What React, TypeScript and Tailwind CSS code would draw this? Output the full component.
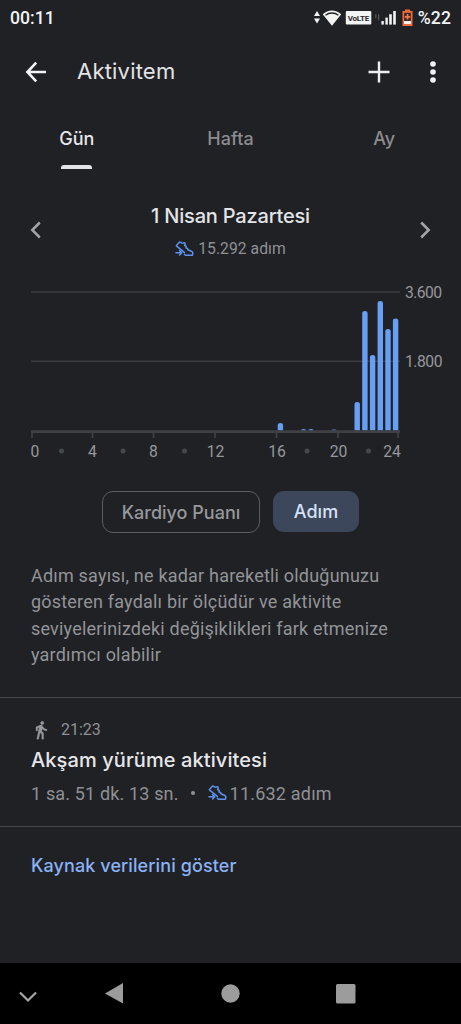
import type { ReactNode } from 'react'

const TICKS = [
  { x: 32, label: '0', labelX: 35 },
  { x: 92.5, label: '4', labelX: 92.5 },
  { x: 153.5, label: '8', labelX: 153.5 },
  { x: 215, label: '12', labelX: 215.5 },
  { x: 276.5, label: '16', labelX: 277 },
  { x: 338, label: '20', labelX: 338.5 },
  { x: 398, label: '24', labelX: 392 },
]

const DOTS = [61.5, 123, 184.5, 307, 368.5]

// one bar per half hour, y measured from the top of the chart
const BARS = [
  { x: 280.4, top: 143 },
  { x: 303.5, top: 149 },
  { x: 311, top: 149 },
  { x: 334, top: 149.4 },
  { x: 357.2, top: 122 },
  { x: 364.9, top: 31 },
  { x: 372.6, top: 75 },
  { x: 380.3, top: 21 },
  { x: 388, top: 49 },
  { x: 395.6, top: 38.5 },
]

function ShoeIcon() {
  return (
    <svg width="19" height="16" viewBox="0 0 19 16" fill="none" stroke="#5b93ee" strokeWidth="1.5" strokeLinejoin="round" strokeLinecap="round" className="shrink-0">
      <path d="M9.4 11.4L1.6 5.2Q1.2 4.6 1.8 4L4.4 1.2Q5 .7 5.6 1.3Q6.8 2.6 8.6 1.9Q9.8 1.6 10.2 2.8L9.6 4.6L11.2 5.2L11 7L12.6 7.4L12.8 8.8L16.4 10.2Q18.6 11.4 17.4 14.2H11.4Q10.2 14.2 9.4 13.4" />
      <path d="M1 11.8H6.4M4.6 9.6L6.8 11.8L4.6 14" />
    </svg>
  )
}

function StatusBar() {
  return (
    <div className="flex h-[37px] items-center justify-between pl-[10px] pr-[10px] font-['Roboto',sans-serif] text-[17.6px] font-medium text-[#f1f3f4]">
      <span>00:11</span>
      <div className="flex items-center">
        <svg width="84" height="20" viewBox="0 0 84 20" fill="#f4f4f5">
          <path d="M0 8L3 3L6 8ZM0 10.5H6L3 15.5Z" />
          <path d="M8.7 6.3C13.8 1.2 22 1.2 27.2 6.3L18 17.8Z" />
          <path d="M11.5 7.3C15.3 4.2 20.6 4.2 24.4 7.3" fill="none" stroke="#202125" strokeWidth="1.3" />
          <rect x="31.8" y="3" width="25.5" height="13.5" rx="1" />
          <text x="44.5" y="12.7" textAnchor="middle" fontFamily="Roboto" fontWeight="700" fontSize="8" fill="#27282b" textLength="21.5">VoLTE</text>
          <rect x="61.2" y="6.3" width="1.2" height="4" fill="#55565a" />
          <rect x="64" y="6.3" width="1.2" height="6" fill="#55565a" />
          <rect x="67.4" y="13" width="2.4" height="3.6" />
          <rect x="71.4" y="9.6" width="2.4" height="7" />
          <rect x="75.2" y="6.2" width="2.6" height="10.4" />
          <rect x="79.2" y="3" width="2.6" height="13.6" />
        </svg>
        <svg width="11" height="18" viewBox="0 0 11 18" className="ml-[4px]">
          <path d="M3 .5H8V2H10.5V17H.5V2H3Z" fill="#ef6d3d" />
          <rect x="2.2" y="3.8" width="6.6" height="11" fill="#3a2622" />
          <path d="M5.5 5V10.5M2.8 7.8H8.2" stroke="#ef7b50" strokeWidth="1.7" />
          <rect x="2" y="12" width="7" height="3" fill="#f8efec" />
        </svg>
        <span className="ml-[5px] tracking-[0.1px]">%22</span>
      </div>
    </div>
  )
}

function AppBar() {
  return (
    <header className="flex h-[69px] items-center">
      <svg width="22" height="22" viewBox="0 0 22 22" fill="none" stroke="#f1f3f4" strokeWidth="2.6" className="ml-[25px]">
        <path d="M21 11H3M11.2 1.7L2.4 11L11.2 20.3" />
      </svg>
      <h1 className="ml-[30px] grow text-[22px] tracking-[0.2px] text-[#e3e3e6]">Aktivitem</h1>
      <svg width="22" height="22" viewBox="0 0 22 22" stroke="#eeeef0" strokeWidth="2.4">
        <path d="M11 .5V21.5M.5 11H21.5" />
      </svg>
      <svg width="6" height="22" viewBox="0 0 6 22" fill="#f1f3f4" className="ml-[40px] mr-[25px]">
        <circle cx="3" cy="3" r="2.8" />
        <circle cx="3" cy="11" r="2.8" />
        <circle cx="3" cy="19" r="2.8" />
      </svg>
    </header>
  )
}

function Tab({ active, children }: { active?: boolean; children: ReactNode }) {
  return (
    <button className={`flex flex-col items-center text-[18px] leading-6 font-medium ${active ? 'text-[#e6e7ea]' : 'text-[#8b8c90]'}`}>
      <span>{children}</span>
      {active && <span className="mt-[14px] h-1 w-[31px] rounded-t-[3px] bg-[#e3e4e8]" />}
    </button>
  )
}

function StepsChart() {
  return (
    <svg width="461" height="190" viewBox="0 0 461 190" className="block font-['Roboto',sans-serif]" fill="#96979b" fontSize="15.7">
      <path d="M31 11.9H400M31 81.3H400" stroke="#3b3c40" strokeWidth="1.5" />
      {BARS.map((b) => (
        <path key={b.x} d={`M${b.x - 2.7} 150.5V${Math.min(b.top + 2, 150.5)}Q${b.x - 2.7} ${b.top} ${b.x} ${b.top}T${b.x + 2.7} ${Math.min(b.top + 2, 150.5)}V150.5Z`} fill="#689ff3" />
      ))}
      <rect x="31" y="150.3" width="369" height="2.7" fill="#404145" />
      {TICKS.map((t) => (
        <g key={t.label}>
          <rect x={t.x - 0.8} y="152" width="1.6" height="6" fill="#404145" />
          <text x={t.labelX} y="176.5" textAnchor="middle">{t.label}</text>
        </g>
      ))}
      {DOTS.map((x) => (
        <circle key={x} cx={x} cy="171" r="2.5" fill="#46474b" />
      ))}
      <text x="405" y="17.6" textLength="37">3.600</text>
      <text x="405" y="87" textLength="37.5">1.800</text>
    </svg>
  )
}

function NavBar() {
  return (
    <nav className="mt-auto flex h-[61px] items-start bg-black">
      <svg width="461" height="61" viewBox="0 0 461 61" fill="#9c9c9c">
        <path d="M20 29.5L28 37.5L36 29.5" fill="none" stroke="#a5a5a5" strokeWidth="2.2" />
        <path d="M105 30.5L123 20V40.5Z" />
        <circle cx="230.5" cy="30.5" r="9.2" />
        <rect x="336" y="21" width="19.5" height="19.5" rx="1.5" />
      </svg>
    </nav>
  )
}

export default function App() {
  return (
    <div className="flex h-[1024px] w-[461px] flex-col overflow-hidden bg-[#202125] font-['Inter',sans-serif]">
      <StatusBar />
      <AppBar />

      <div className="grid h-[74px] grid-cols-3 items-start pt-[21px]">
        <Tab active>Gün</Tab>
        <Tab>Hafta</Tab>
        <Tab>Ay</Tab>
      </div>

      {/* Day picker */}
      <div className="flex h-[100px] items-center px-[30px]">
        <svg width="11" height="18" viewBox="0 0 11 18" fill="none" stroke="#a3a4a8" strokeWidth="2.5">
          <path d="M9.8 1.5L2.3 9L9.8 16.5" />
        </svg>
        <div className="flex grow flex-col items-center pt-[3px]">
          <h2 className="text-[20px] leading-7 font-medium tracking-[-0.2px] text-[#e3e4e7]">1 Nisan Pazartesi</h2>
          <div className="mt-[7px] flex items-center gap-[4px] font-['Roboto',sans-serif] text-[15.7px] leading-6 text-[#8f9094]">
            <ShoeIcon />
            <span className="tracking-[0.05px]">15.292 adım</span>
          </div>
        </div>
        <svg width="11" height="18" viewBox="0 0 11 18" fill="none" stroke="#a3a4a8" strokeWidth="2.5">
          <path d="M1.2 1.5L8.7 9L1.2 16.5" />
        </svg>
      </div>

      <StepsChart />

      <div className="mt-[21px] flex justify-center gap-[13px] text-[18px] font-medium">
        <button className="h-[42px] w-[158px] rounded-[11px] border-[1.5px] border-[#5b5c60] text-[#97989c]">Kardiyo Puanı</button>
        <button className="h-[41px] w-[86px] rounded-[11px] bg-[#3d475c] text-[#d6e2f8]">Adım</button>
      </div>

      <p className="mt-[30px] ml-[31px] font-['Roboto',sans-serif] text-[18px] leading-[26.3px] tracking-[0.2px] text-[#939498]">
        Adım sayısı, ne kadar hareketli olduğunuzu
        <br />
        gösteren faydalı bir ölçüdür ve aktivite
        <br />
        seviyelerinizdeki değişiklikleri fark etmenize
        <br />
        yardımcı olabilir
      </p>

      {/* Evening walk */}
      <section className="mt-[29px] h-[130px] border-y border-[#46474b] pl-[31px] pt-[20px] font-['Roboto',sans-serif] text-[#8f9094]">
        <div className="flex h-6 items-center">
          <svg width="20" height="20" viewBox="0 0 24 24" fill="#98999d" stroke="#98999d" strokeWidth="0.4">
            <path d="M13.5 5.5c1.1 0 2-.9 2-2s-.9-2-2-2-2 .9-2 2 .9 2 2 2zM9.8 8.9L7 23h2.1l1.8-8 2.1 2v6h2v-7.5l-2.1-2 .6-3C14.8 12 16.8 13 19 13v-2c-1.9 0-3.5-1-4.3-2.4l-1-1.6c-.4-.6-1-1-1.7-1-.3 0-.5.1-.8.1L6 8.3V13h2V9.6l1.8-.7" />
          </svg>
          <span className="ml-[10px] text-[16px]">21:23</span>
        </div>
        <h3 className="mt-[4px] font-['Inter',sans-serif] text-[20px] leading-7 font-medium tracking-[0.1px] text-[#e6e7ea]">Akşam yürüme aktivitesi</h3>
        <div className="mt-[7px] flex h-6 items-center text-[18px]">
          <span className="tracking-[0.15px]">1 sa. 51 dk. 13 sn.</span>
          <span className="mr-[13px] ml-[12px] size-1 rounded-full bg-[#8f9094]" />
          <ShoeIcon />
          <span className="ml-[3px] tracking-[0.2px]">11.632 adım</span>
        </div>
      </section>

      <a href="#" className="mt-[26px] ml-[31px] self-start text-[18px] leading-[26px] font-medium tracking-[0.1px] text-[#8ab2f5]">Kaynak verilerini göster</a>

      <NavBar />
    </div>
  )
}
